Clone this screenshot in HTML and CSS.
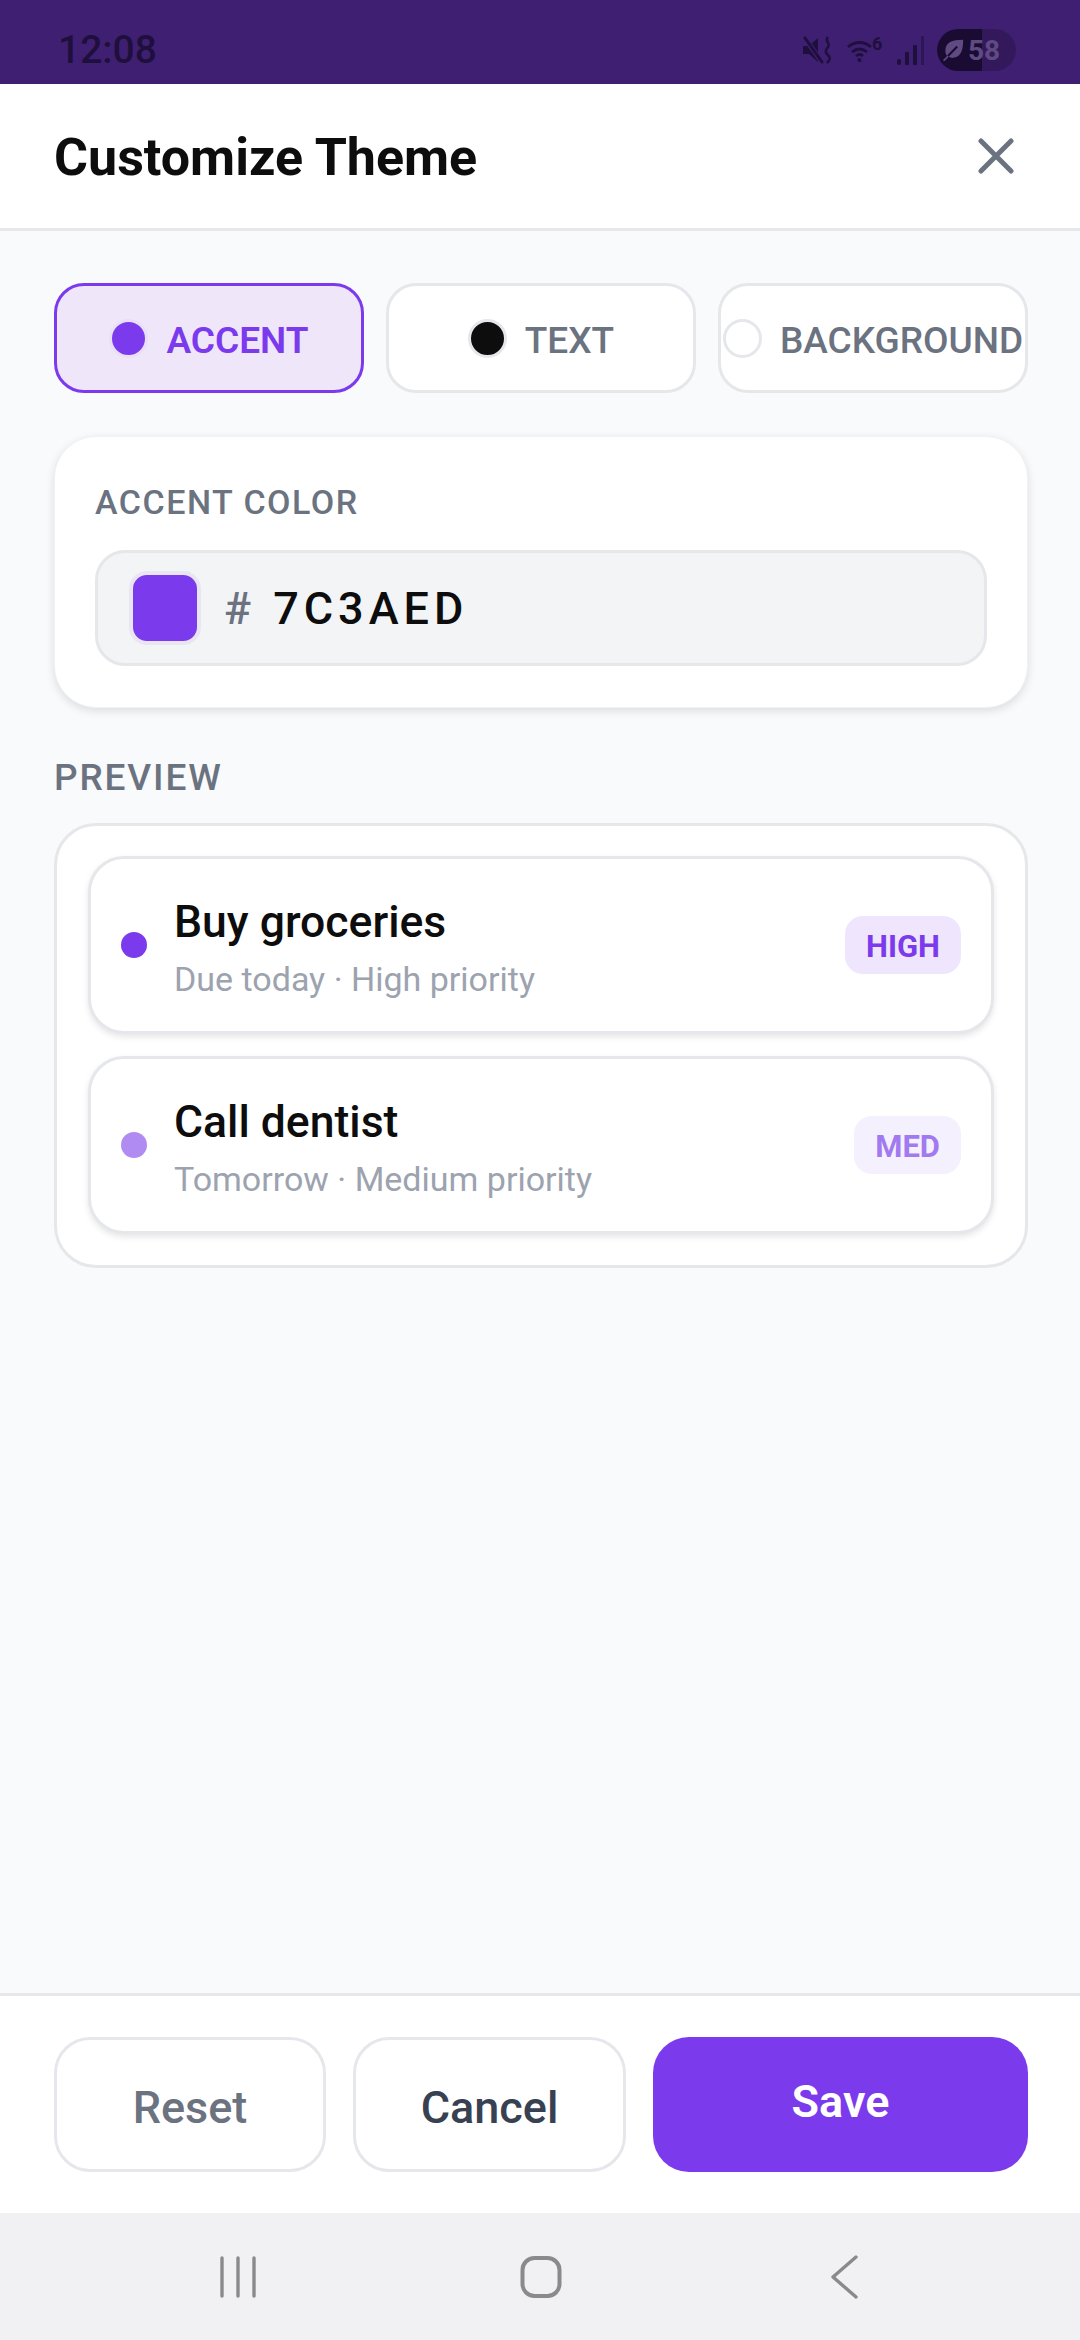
FILE: index.html
```html
<!DOCTYPE html>
<html lang="en">
<head>
    <meta charset="UTF-8">
    <meta name="viewport" content="width=device-width, initial-scale=1.0">
    <title>Customize Theme</title>
    <link rel="stylesheet" href="styles.css">
</head>
<body>
    <div class="status-bar">
        <span class="status-time">12:08</span>
        <div class="status-icons">
            <svg class="icon-mute" viewBox="0 0 29 28" width="29" height="28">
                <path d="M0 10h6l9-8v24l-9-8H0z" fill="#1f0f3c"/>
                <path d="M1 1l18 25" stroke="#3f1f72" stroke-width="5"/>
                <path d="M2 2l17 24" stroke="#1f0f3c" stroke-width="3" stroke-linecap="round"/>
                <path d="M25 1c-4 4 3 6 0 10s-3 5 0 8 2 5-1 8" fill="none" stroke="#1f0f3c" stroke-width="2.6"/>
            </svg>
            <svg class="icon-wifi" viewBox="0 0 33 24" width="33" height="24">
                <path d="M1 9c7-6 16-6 23 0M5 14c5-4 10-4 15 0M9 18c2.500-2 5-2 7 0" fill="none" stroke="#1f0f3c" stroke-width="2.8"/>
                <circle cx="12.500" cy="22" r="2" fill="#1f0f3c"/>
            </svg>
            <span class="wifi-num">6</span>
            <svg class="icon-signal" viewBox="0 0 27 29" width="27" height="29">
                <rect x="0" y="23" width="4" height="6" rx="2" fill="#1f0f3c"/>
                <rect x="8" y="16" width="4" height="13" rx="1" fill="#1f0f3c"/>
                <rect x="16" y="9" width="4" height="20" rx="1" fill="#1f0f3c"/>
                <rect x="24" y="0" width="3" height="29" fill="#2c1655"/>
            </svg>
            <div class="battery">
                <svg viewBox="0 0 26 26" width="22" height="22">
                    <path d="M25 1C12 1 4 4 4 14c0 3 1 5 2 6L1 25l2 1 5-5c2 1 4 2 6 1C23 21 25 12 25 1z" fill="#5f4b82"/>
                    <path d="M7 20L18 9" stroke="#1a0b33" stroke-width="2.500"/>
                </svg>
                <span>58</span>
            </div>
        </div>
    </div>

    <header class="top-bar">
        <h1 class="page-title">Customize Theme</h1>
        <svg class="close-icon" viewBox="0 0 36 36" width="36" height="36">
            <path d="M3 3l30 30M33 3L3 33" fill="none" stroke="#6b7280" stroke-width="5" stroke-linecap="round"/>
        </svg>
    </header>

    <main class="content">
        <div class="tabs">
            <div class="tab tab-active"><span class="tab-dot dot-accent"></span><span class="tab-label">ACCENT</span></div>
            <div class="tab"><span class="tab-dot dot-text"></span><span class="tab-label">TEXT</span></div>
            <div class="tab"><span class="tab-dot dot-bg"></span><span class="tab-label">BACKGROUND</span></div>
        </div>

        <section class="color-card">
            <div class="label">ACCENT COLOR</div>
            <div class="color-input">
                <span class="swatch"></span>
                <span class="hash">#</span>
                <span class="hex">7C3AED</span>
            </div>
        </section>

        <div class="label preview-label">PREVIEW</div>
        <section class="preview">
            <div class="task">
                <span class="task-dot"></span>
                <div class="task-body">
                    <div class="task-title">Buy groceries</div>
                    <div class="task-sub">Due today · High priority</div>
                </div>
                <span class="badge">HIGH</span>
            </div>
            <div class="task task-med">
                <span class="task-dot"></span>
                <div class="task-body">
                    <div class="task-title">Call dentist</div>
                    <div class="task-sub">Tomorrow · Medium priority</div>
                </div>
                <span class="badge">MED</span>
            </div>
        </section>
    </main>

    <footer class="actions">
        <button class="btn btn-reset">Reset</button>
        <button class="btn btn-cancel">Cancel</button>
        <button class="btn btn-save">Save</button>
    </footer>

    <nav class="nav-bar">
        <svg viewBox="0 0 38 42" width="38" height="42">
            <path d="M3 2v38M19 2v38M35 2v38" fill="none" stroke="#8a8a8d" stroke-width="3.400" stroke-linecap="round"/>
        </svg>
        <svg class="nav-home" viewBox="0 0 42 44" width="42" height="44">
            <rect x="2.500" y="3" width="37" height="38" rx="12" fill="none" stroke="#8a8a8d" stroke-width="4"/>
        </svg>
        <svg viewBox="0 0 28 44" width="28" height="44">
            <path d="M26 2L3 22l23 20" fill="none" stroke="#8a8a8d" stroke-width="3.400" stroke-linecap="round" stroke-linejoin="round"/>
        </svg>
    </nav>
</body>
</html>
```

FILE: styles.css
```css
* {
    box-sizing: border-box;
}

body {
    margin: 0;
    width: 1080px;
    height: 2340px;
    display: flex;
    flex-direction: column;
    font-family: Roboto, sans-serif;
    background-color: #f9fafb;
    color: #0d0d0d;
}

.status-bar {
    height: 84px;
    flex: none;
    background-color: #3f1f72;
    display: flex;
    align-items: center;
    justify-content: space-between;
    padding: 16px 64px 0 58px;
}

.status-time {
    font-size: 39px;
    font-weight: 500;
    color: #1f0f3c;
}

.status-icons {
    display: flex;
    align-items: center;
}

.wifi-num {
    font-size: 18px;
    font-weight: 700;
    color: #1f0f3c;
    width: 0;
    margin: -14px 8px 0 -8px;
}

.icon-mute {
    margin-right: 15px;
}

.icon-signal {
    margin-left: 17px;
    margin-right: 13px;
}

.battery {
    width: 79px;
    height: 42px;
    border-radius: 21px;
    background: linear-gradient(90deg, #1a0b33 45px, #33185c 45px);
    display: flex;
    align-items: center;
    gap: 4px;
    padding-left: 5px;
    font-size: 28px;
    font-weight: 700;
    color: #5f4b82;
}

.top-bar {
    height: 147px;
    flex: none;
    background-color: white;
    border-bottom: 3px solid #e5e7eb;
    display: flex;
    align-items: center;
    justify-content: space-between;
    padding: 0 66px 0 54px;
}

.page-title {
    font-size: 52px;
    font-weight: 700;
    margin: 0;
    padding-top: 2px;
}

.content {
    flex: 1;
    padding: 52px 52px 0 54px;
}

.tabs {
    display: grid;
    grid-template-columns: repeat(3, 1fr);
    gap: 22px;
}

.tab {
    height: 110px;
    background-color: white;
    border: 3px solid #e5e7eb;
    border-radius: 30px;
    display: flex;
    align-items: center;
    justify-content: center;
    gap: 18px;
    font-size: 37px;
    font-weight: 500;
    color: #6b7280;
    white-space: nowrap;
}

.tab-label {
    padding-top: 4px;
}

.tab-active {
    background-color: #efe6fa;
    border-color: #7c3aed;
    color: #7c3aed;
    font-weight: 600;
}

.tab-dot {
    width: 39px;
    height: 39px;
    flex: none;
    border-radius: 50%;
    border: 3px solid #e5e7eb;
}

.dot-accent {
    background-color: #7c3aed;
    border-color: #e9e0f8;
}

.dot-text {
    background-color: #0d0d0d;
}

.dot-bg {
    background-color: white;
}

.color-card {
    margin-top: 43px;
    height: 272px;
    background-color: white;
    border: 1px solid #f1f2f4;
    border-radius: 42px;
    box-shadow: 0 3px 10px rgba(0, 0, 0, 0.12);
    padding: 45px 40px 0;
}

.label {
    font-size: 34px;
    font-weight: 500;
    letter-spacing: 1.500px;
    color: #6b7280;
}

.color-input {
    margin-top: 28px;
    height: 116px;
    background-color: #f3f4f6;
    border: 3px solid #e5e7eb;
    border-radius: 30px;
    display: flex;
    align-items: center;
    padding-left: 31px;
}

.swatch {
    width: 72px;
    height: 74px;
    flex: none;
    background-color: #7c3aed;
    border: 4px solid #e9e5f2;
    border-radius: 18px;
}

.hash {
    font-size: 45px;
    font-weight: 500;
    letter-spacing: 5px;
    color: #6b7280;
    margin-left: 23px;
}

.hex {
    font-size: 45px;
    font-weight: 500;
    letter-spacing: 5px;
    color: #0d0d0d;
    margin-left: 17px;
}

.preview-label {
    margin-top: 48px;
    font-size: 37px;
    letter-spacing: 1.850px;
}

.preview {
    margin-top: 24px;
    height: 445px;
    background-color: white;
    border: 3px solid #e5e7eb;
    border-radius: 42px;
    padding: 30px 31px 0;
    display: flex;
    flex-direction: column;
    gap: 22px;
}

.task {
    height: 178px;
    border: 3px solid #e5e7eb;
    border-radius: 36px;
    box-shadow: 0 3px 6px rgba(0, 0, 0, 0.1);
    display: flex;
    align-items: center;
    padding: 0 30px;
    background-color: white;
}

.task-dot {
    width: 26px;
    height: 26px;
    flex: none;
    border-radius: 50%;
    background-color: #7c3aed;
}

.task-body {
    flex: 1;
    margin-left: 27px;
    padding-top: 5px;
}

.task-title {
    font-size: 44.500px;
    font-weight: 500;
    line-height: 56px;
}

.task-sub {
    font-size: 34px;
    color: #9ca3af;
    line-height: 44px;
    margin-top: 7px;
}

.badge {
    height: 58px;
    padding: 3px 21px 0;
    border-radius: 18px;
    background-color: #efe6fd;
    color: #7c3aed;
    font-size: 31px;
    font-weight: 700;
    display: flex;
    align-items: center;
}

.task-med .task-dot {
    background-color: #b08cf2;
}

.task-med .badge {
    background-color: #f5f0fe;
    color: #a27aef;
}

.actions {
    height: 220px;
    flex: none;
    background-color: white;
    border-top: 3px solid #e5e7eb;
    display: grid;
    grid-template-columns: 272px 273px 1fr;
    gap: 27px;
    padding: 41px 52px 41px 54px;
}

.btn {
    font-family: Roboto, sans-serif;
    font-size: 45px;
    font-weight: 550;
    border: 3px solid #e5e7eb;
    border-radius: 36px;
    background-color: white;
    padding: 5px 0 0;
}

.btn-reset {
    color: #6b7280;
}

.btn-cancel {
    color: #374151;
}

.btn-save {
    background-color: #7c3aed;
    border: none;
    color: white;
    font-weight: 650;
    padding: 0 0 7px;
}

.nav-bar {
    height: 127px;
    flex: none;
    background-color: #f1f1f3;
    display: flex;
    align-items: center;
    padding: 0 222px 0 219px;
    justify-content: space-between;
}

.nav-home {
    margin-right: 5px;
}
```
